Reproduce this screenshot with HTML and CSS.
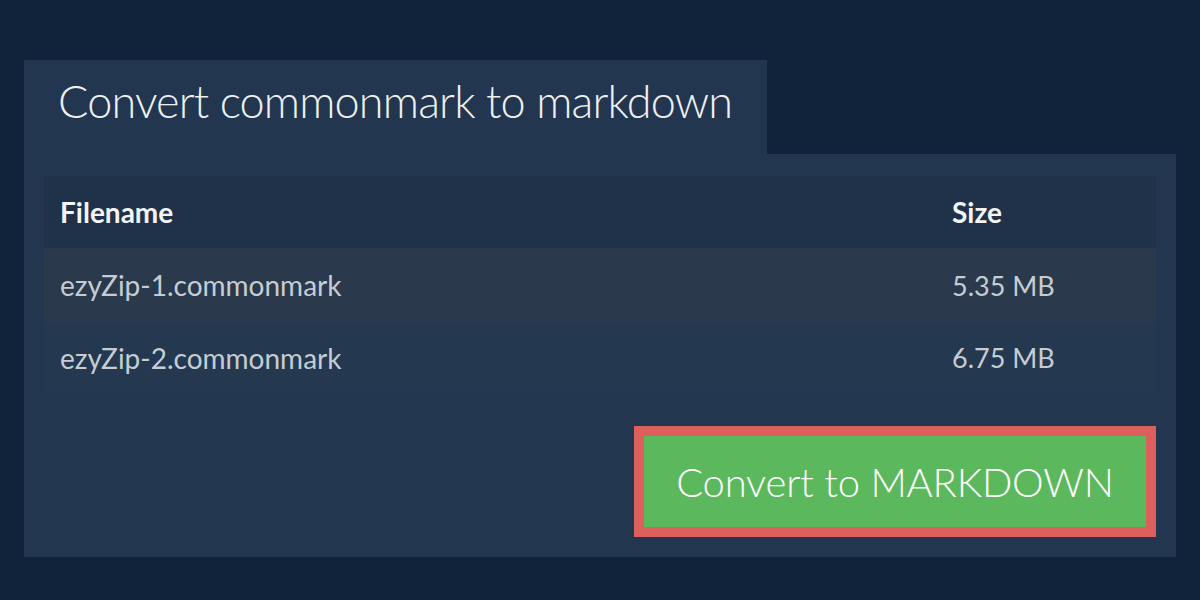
FILE: index.html
```html
<!DOCTYPE html>
<html lang="en">
<head>
<meta charset="utf-8">
<title>Convert commonmark to markdown</title>
<link rel="stylesheet" href="styles.css">
</head>
<body>
<main class="wrap">
  <div class="tab"><h1 class="title">Convert commonmark to markdown</h1></div>
  <section class="panel">
    <table class="files">
      <thead>
        <tr class="head"><th class="c-name">Filename</th><th class="c-size">Size</th></tr>
      </thead>
      <tbody>
        <tr class="row odd"><td class="c-name">ezyZip-1.commonmark</td><td class="c-size">5.35 MB</td></tr>
        <tr class="row even"><td class="c-name">ezyZip-2.commonmark</td><td class="c-size">6.75 MB</td></tr>
      </tbody>
    </table>
    <div class="actions">
      <button class="convert" type="button">Convert to MARKDOWN</button>
    </div>
  </section>
</main>
</body>
</html>
```

FILE: styles.css
```css
html, body {
  margin: 0;
  padding: 0;
}
body {
  background: #10233a;
  font-family: Lato, "Open Sans", sans-serif;
  width: 1200px;
  height: 600px;
  overflow: hidden;
}
.wrap {
  padding: 60px 24px 0;
}
.tab {
  width: 743px;
  height: 94px;
  background: #223650;
  box-sizing: border-box;
  padding-left: 34px;
}
.title {
  margin: 0;
  font-weight: 300;
  font-size: 45px;
  letter-spacing: -0.85px;
  line-height: 82px;
  color: #eef0f2;
  white-space: nowrap;
}
.panel {
  background: #223650;
  padding: 22px 20px 20px;
}
.files {
  width: 100%;
  border-collapse: collapse;
}
.files th, .files td {
  text-align: left;
  padding: 0 0 0 16px;
}
.c-name {
  width: 892px;
  box-sizing: border-box;
}
.head {
  background: #1f3249;
  height: 72px;
}
.head th {
  font-weight: 700;
  font-size: 28px;
  color: #f2f4f6;
}
.row td {
  font-size: 28px;
  color: #c6ccd3;
}
.row .c-size {
  font-size: 27px;
}
.odd {
  background: #2a3a4c;
  height: 74px;
}
.even {
  background: #24384f;
  height: 71px;
}
.actions {
  display: flex;
  justify-content: flex-end;
  padding-top: 33px;
}
.convert {
  width: 522px;
  height: 111px;
  border: 10px solid #dc5f5c;
  background: #5cb85c;
  color: #ffffff;
  font-family: Lato, "Open Sans", sans-serif;
  font-weight: 300;
  font-size: 40px;
  letter-spacing: -0.2px;
  padding: 0;
  cursor: pointer;
}
```
